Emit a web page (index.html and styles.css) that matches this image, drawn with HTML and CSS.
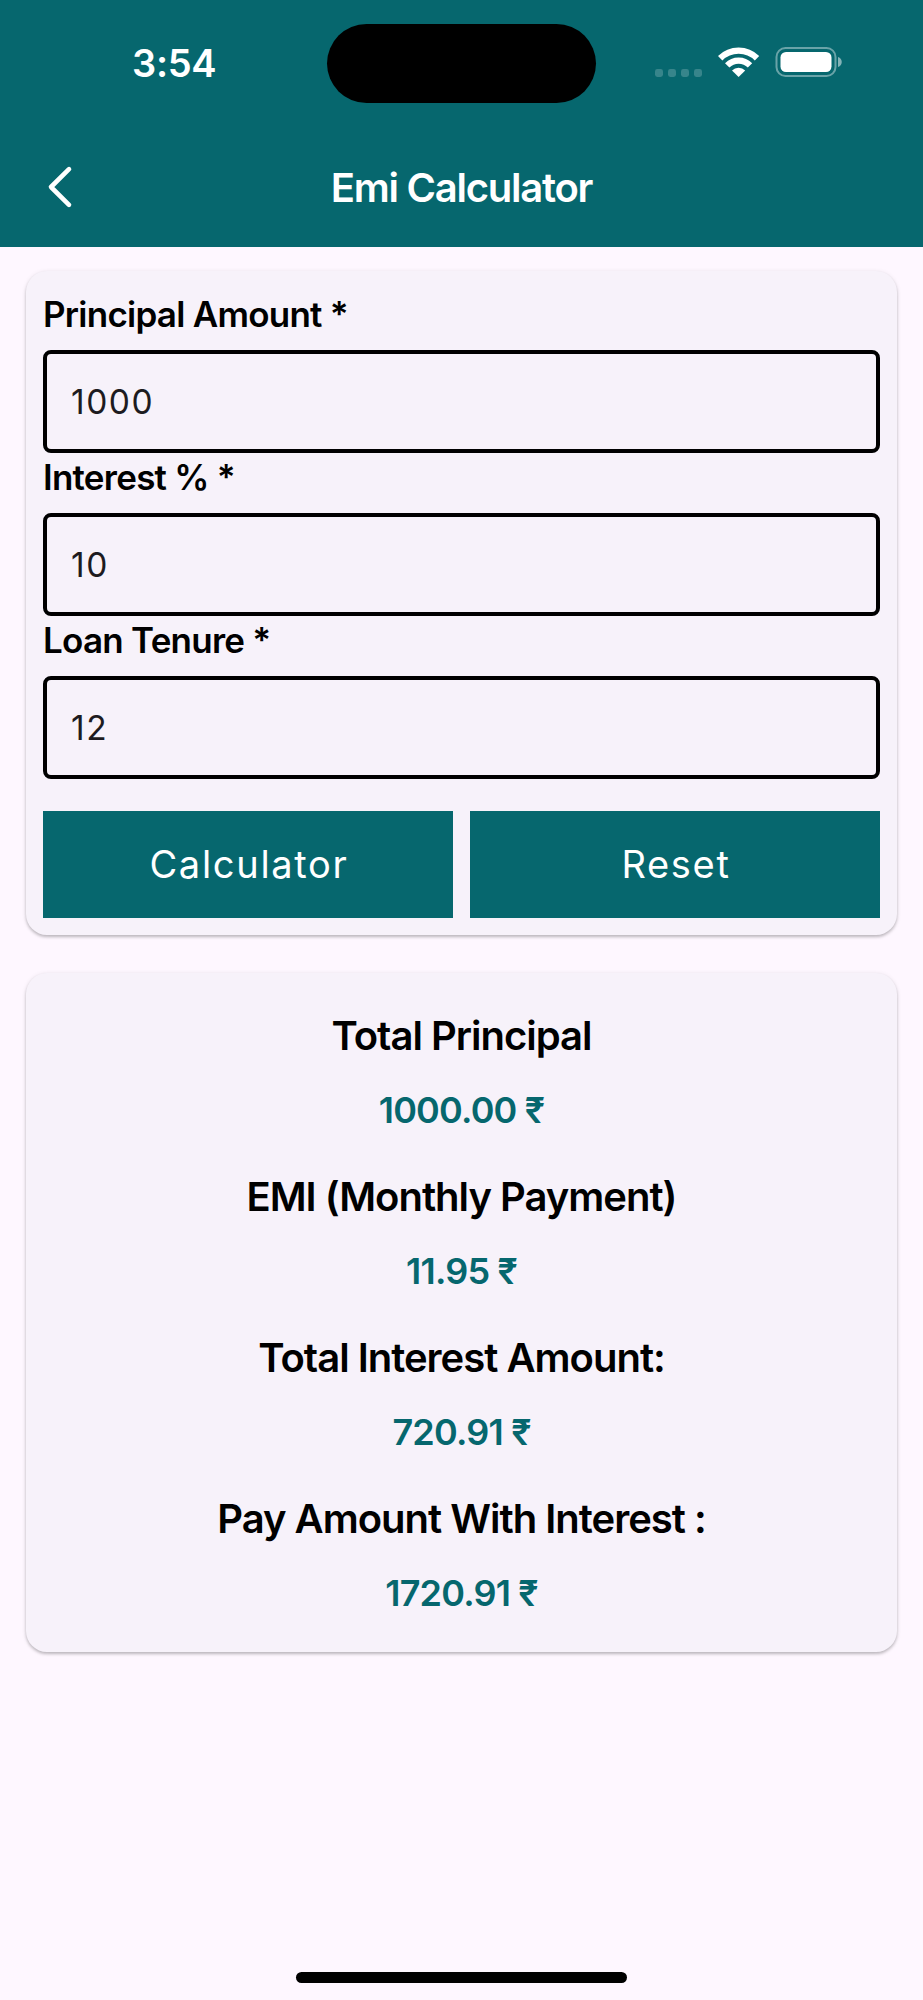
FILE: index.html
```html
<!DOCTYPE html>
<html lang="en">
<head>
    <meta charset="UTF-8">
    <meta name="viewport" content="width=device-width, initial-scale=1.0">
    <title>Emi Calculator</title>
    <link rel="stylesheet" href="styles.css">
</head>
<body>
    <header class="header">
        <div class="status-bar">
            <div class="clock">3:54</div>
            <div class="island"></div>
            <div class="status-icons">
                <svg width="187" height="30" viewBox="0 0 187 30">
                    <!-- signal -->
                    <g fill="#fff" fill-opacity="0.2">
                        <rect x="0" y="22" width="8" height="8" rx="2.4"/>
                        <rect x="13" y="22" width="8" height="8" rx="2.4"/>
                        <rect x="26" y="22" width="8" height="8" rx="2.4"/>
                        <rect x="39" y="22" width="8" height="8" rx="2.4"/>
                    </g>
                    <!-- wifi -->
                    <g fill="none" stroke="#fff" stroke-width="6.2">
                        <path d="M65.2 11.2A26 26 0 0 1 102 11.2"/>
                        <path d="M72.2 18.4A16.2 16.2 0 0 1 95 18.4"/>
                    </g>
                    <path fill="#fff" d="M83.6 30L77 23.4A9.4 9.4 0 0 1 90.2 23.4Z"/>
                    <!-- battery -->
                    <rect x="121.5" y="1" width="59" height="28" rx="9" fill="none" stroke="#fff" stroke-opacity="0.4" stroke-width="2"/>
                    <rect x="125.5" y="5" width="51" height="20" rx="5.5" fill="#fff"/>
                    <path fill="#fff" fill-opacity="0.5" d="M183 10C188 11.5 188 18.5 183 20Z"/>
                </svg>
            </div>
        </div>
        <div class="app-bar">
            <svg class="back" width="26" height="44" viewBox="0 0 26 44">
                <path d="M22 4.2L4 22L22 39.8" fill="none" stroke="#fff" stroke-width="4.6" stroke-linecap="round" stroke-linejoin="round"/>
            </svg>
            <h1 class="title">Emi Calculator</h1>
        </div>
    </header>

    <main class="content">
        <form class="card form-card" id="formulario">
            <div class="form-group">
                <label for="principal">Principal Amount *</label>
                <input type="text" id="principal" name="principal" value="1000">
            </div>
            <div class="form-group">
                <label for="interest">Interest % *</label>
                <input type="text" id="interest" name="interest" value="10">
            </div>
            <div class="form-group">
                <label for="tenure">Loan Tenure *</label>
                <input type="text" id="tenure" name="tenure" value="12">
            </div>
            <div class="buttons">
                <button type="button">Calculator</button>
                <button type="reset">Reset</button>
            </div>
        </form>

        <section class="card result-card">
            <div class="result-title">Total Principal</div>
            <div class="result-value">1000.00 ₹</div>
            <div class="result-title">EMI (Monthly Payment)</div>
            <div class="result-value">11.95 ₹</div>
            <div class="result-title">Total Interest Amount:</div>
            <div class="result-value">720.91 ₹</div>
            <div class="result-title">Pay Amount With Interest :</div>
            <div class="result-value">1720.91 ₹</div>
        </section>
    </main>

    <div class="home-indicator"></div>
</body>
</html>
```
FILE: styles.css
```css
* {
    box-sizing: border-box;
}
body {
    font-family: Inter, "Liberation Sans", sans-serif;
    background-color: #fef7ff;
    color: #000;
    margin: 0;
    height: 2000px;
    display: flex;
    flex-direction: column;
}
.header {
    background-color: #06676e;
    color: #fff;
    height: 247px;
}
.status-bar {
    display: grid;
    grid-template-columns: 327px 269px 327px;
    align-items: center;
    height: 127px;
}
.clock {
    font-size: 38px;
    font-weight: 600;
    letter-spacing: -0.3px;
    padding-left: 132px;
    padding-bottom: 2px;
}
.island {
    height: 79px;
    border-radius: 40px;
    background-color: #000;
}
.status-icons {
    padding-left: 59px;
    line-height: 0;
    margin-top: -3px;
}
.app-bar {
    display: grid;
    grid-template-columns: 80px 1fr 80px;
    align-items: center;
    height: 120px;
}
.back {
    margin-left: 47px;
}
.title {
    margin: 0;
    font-size: 40px;
    font-weight: 600;
    text-align: center;
    letter-spacing: -1.25px;
}
.content {
    flex: 1;
    padding: 24px 26px 0;
}
.card {
    background-color: #f7f2fa;
    border-radius: 21px;
    box-shadow: 0 2px 3px rgba(0, 0, 0, 0.2), 0 1px 5px rgba(0, 0, 0, 0.1);
}
.form-card {
    padding: 19px 17px 17px;
    margin-bottom: 38px;
}
.form-group label {
    display: block;
    margin-bottom: 11px;
    font-size: 35px;
    font-weight: 600;
    line-height: 49px;
    letter-spacing: -0.75px;
}
.form-group input {
    display: block;
    width: 100%;
    height: 103px;
    padding: 0 24px;
    border: 4px solid #000;
    border-radius: 8px;
    background: none;
    color: #1d1b20;
    font-family: inherit;
    font-size: 33.5px;
    letter-spacing: 1.5px;
}
.buttons {
    display: flex;
    gap: 17px;
    margin-top: 32px;
}
.buttons button {
    flex: 1;
    height: 107px;
    padding: 0 0 2px 2px;
    border: none;
    background-color: #06676e;
    color: #fff;
    font-family: inherit;
    font-size: 38px;
    letter-spacing: 1.7px;
}
.result-card {
    padding: 38px 17px 36px;
    text-align: center;
}
.result-title {
    font-size: 40px;
    font-weight: 600;
    line-height: 50px;
    letter-spacing: -1px;
    margin-bottom: 26px;
}
.result-value {
    color: #06676e;
    font-size: 36px;
    font-weight: 600;
    line-height: 46px;
    letter-spacing: -0.8px;
    margin-bottom: 39px;
}
.result-value:last-child {
    margin-bottom: 0;
}
.home-indicator {
    width: 331px;
    height: 11px;
    margin: 0 auto 17px;
    border-radius: 6px;
    background-color: #000;
}
```
